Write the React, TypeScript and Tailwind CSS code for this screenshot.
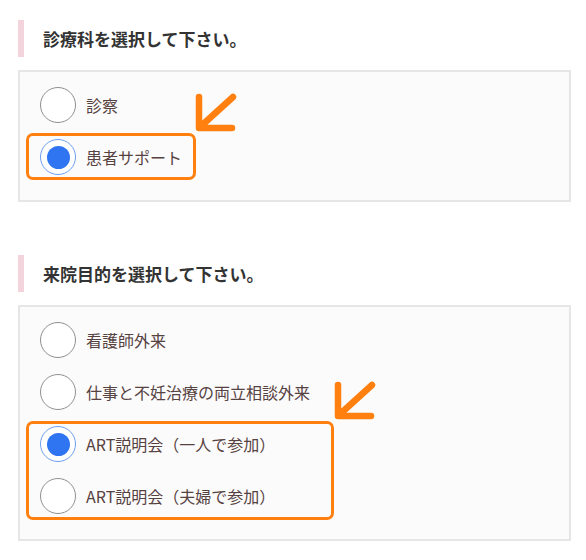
import React from "react";

type Option = { label: string; checked?: boolean };

const font = { fontFamily: '"Noto Sans CJK JP", "Noto Sans", sans-serif' };

const Radio = ({ checked }: { checked?: boolean }) =>
  checked ? (
    <span className="flex h-[36px] w-[36px] shrink-0 items-center justify-center rounded-full border-[1.5px] border-[#6d9ff0] bg-white">
      <span className="h-[23px] w-[23px] rounded-full bg-[#2f74f0]" />
    </span>
  ) : (
    <span className="h-[36px] w-[36px] shrink-0 rounded-full border-[1.5px] border-[#8f8f8f] bg-white" />
  );

const Arrow = ({ className }: { className: string }) => (
  <svg className={className} width="44" height="42" viewBox="0 0 44 42" fill="none">
    <path
      d="M5 5 V36 H38 M6 35 L39 5"
      stroke="#ff7f0f"
      strokeWidth="6.5"
      strokeLinecap="round"
      strokeLinejoin="round"
    />
  </svg>
);

const Section = ({
  title,
  options,
  children,
}: {
  title: string;
  options: Option[];
  children?: React.ReactNode;
}) => (
  <section>
    <div className="flex h-[37px] items-center border-l-[6px] border-[#f3d3dc] pl-[19px]">
      <h2 className="text-[17px] font-bold text-[#333]">{title}</h2>
    </div>
    <div className="relative mt-[13px] w-[553px] border-2 border-[#e6e6e6] bg-[#fbfbfb] pb-[17px] pt-[7px] pl-[20px]">
      {options.map((o) => (
        <label key={o.label} className="flex h-[52px] items-center gap-[10px]">
          <Radio checked={o.checked} />
          <span className="text-[16px] text-[#574242]">{o.label}</span>
        </label>
      ))}
      {children}
    </div>
  </section>
);

export default function App() {
  return (
    <div className="flex min-h-[560px] w-[586px] flex-col gap-[53px] bg-white pl-[18px] pt-[20px]" style={font}>
      <Section
        title="診療科を選択して下さい。"
        options={[{ label: "診察" }, { label: "患者サポート", checked: true }]}
      >
        <div className="absolute left-[6px] top-[61px] h-[47px] w-[170px] rounded-[7px] border-[3px] border-[#ff7f0f]" />
        <Arrow className="absolute left-[174px] top-[20px]" />
      </Section>
      <Section
        title="来院目的を選択して下さい。"
        options={[
          { label: "看護師外来" },
          { label: "仕事と不妊治療の両立相談外来" },
          { label: "ART説明会（一人で参加）", checked: true },
          { label: "ART説明会（夫婦で参加）" },
        ]}
      >
        <div className="absolute left-[6px] top-[114px] h-[99px] w-[308px] rounded-[7px] border-[3px] border-[#ff7f0f]" />
        <Arrow className="absolute left-[313px] top-[73px]" />
      </Section>
    </div>
  );
}
